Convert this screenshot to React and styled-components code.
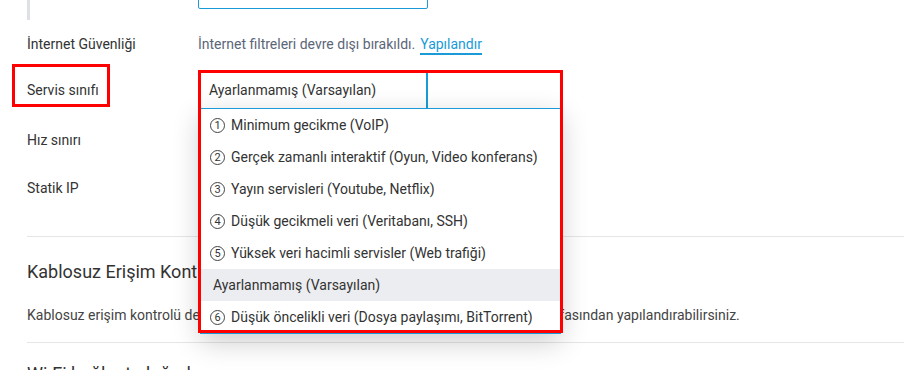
import React from 'react'
import styled, { createGlobalStyle } from 'styled-components'

const GlobalStyle = createGlobalStyle`
  body {
    margin: 0;
    background: #fff;
    font-family: Roboto, 'Noto Sans', sans-serif;
    color: #333;
  }
`

const Page = styled.div`
  width: 904px;
  height: 370px;
  overflow: hidden;
  padding-left: 27px;
  box-sizing: border-box;
`

const SubBlock = styled.div`
  margin-top: -30px;
  border-left: 3px solid #dde1e6;
  padding: 3px 0 11px;
  display: grid;
  grid-template-columns: 168px 230px;
`

const TextInput = styled.div`
  grid-column: 2;
  height: 36px;
  border: 1px solid #1a9bd7;
  border-radius: 2px;
  box-sizing: border-box;
`

const Row = styled.div`
  display: grid;
  grid-template-columns: 171px 1fr;
  align-items: center;
  height: ${(p) => p.$h}px;
  font-size: 14px;
`

const Label = styled.div`
  position: relative;
  font-size: 14px;
  color: #333;
  ${(p) =>
    p.$marked &&
    `
    &::before {
      content: '';
      position: absolute;
      left: -15px;
      top: -18px;
      width: 98px;
      height: 43px;
      border: 3px solid #f00;
      box-sizing: border-box;
    }
  `}
`

const Muted = styled.span`
  color: #5b6678;
`

const Link = styled.a`
  color: #1a9bd7;
  text-decoration: none;
  border-bottom: 2px solid #1a9bd7;
  padding-bottom: 1px;
  margin-left: 5px;
`

const SelectWrap = styled.div`
  position: relative;
  width: 230px;
  z-index: 2;
`

const SelectBox = styled.div`
  height: 38px;
  border: 1px solid #1a9bd7;
  border-right-width: 2px;
  box-sizing: border-box;
  display: flex;
  align-items: center;
  padding-left: 10px;
  font-size: 14px;
  color: #333;
`

const Menu = styled.ul`
  position: absolute;
  left: 2px;
  top: 37px;
  width: 361px;
  margin: 0;
  padding: 0;
  list-style: none;
  background: #fff;
  border: 1px solid #1a9bd7;
  box-sizing: border-box;
  box-shadow: 0 8px 26px rgba(0, 0, 0, 0.2);
`

const Item = styled.li`
  display: flex;
  align-items: center;
  height: 32px;
  padding-left: ${(p) => (p.$active ? 12 : 9)}px;
  background: ${(p) => (p.$active ? '#ecedf0' : '#fff')};
  font-size: 14px;
  color: #333;
  white-space: nowrap;
`

const Circle = styled.span`
  display: inline-flex;
  align-items: center;
  justify-content: center;
  width: 15px;
  height: 15px;
  border: 1px solid #444;
  border-radius: 50%;
  box-sizing: border-box;
  font-size: 11px;
  line-height: 1;
  margin-right: 6px;
  color: #333;
`

const Marker = styled.div`
  position: absolute;
  left: 0;
  top: -1px;
  width: 365px;
  height: 263px;
  border: 3px solid #f00;
  box-sizing: border-box;
  pointer-events: none;
`

const Divider = styled.hr`
  border: 0;
  border-top: 1px solid #e6e6e6;
  margin: ${(p) => p.$mt}px 0 0;
`

const Heading = styled.h2`
  margin: ${(p) => p.$mt}px 0 0;
  font-size: 18px;
  line-height: 24px;
  font-weight: 400;
  color: #333;
  white-space: nowrap;
`

const Desc = styled.p`
  margin: 21px 0 0;
  font-size: 14px;
  line-height: 20px;
  color: #444;
  white-space: nowrap;
`

const options = [
  { n: 1, text: 'Minimum gecikme (VoIP)' },
  { n: 2, text: 'Gerçek zamanlı interaktif (Oyun, Video konferans)' },
  { n: 3, text: 'Yayın servisleri (Youtube, Netflix)' },
  { n: 4, text: 'Düşük gecikmeli veri (Veritabanı, SSH)' },
  { n: 5, text: 'Yüksek veri hacimli servisler (Web trafiği)' },
  { n: null, text: 'Ayarlanmamış (Varsayılan)' },
  { n: 6, text: 'Düşük öncelikli veri (Dosya paylaşımı, BitTorrent)' },
]

const App = () => {
  return (
    <Page>
      <GlobalStyle />
      <SubBlock>
        <TextInput />
      </SubBlock>
      <Row $h={48}>
        <Label>İnternet Güvenliği</Label>
        <div>
          <Muted>İnternet filtreleri devre dışı bırakıldı.</Muted>
          <Link>Yapılandır</Link>
        </div>
      </Row>
      <Row $h={44}>
        <Label $marked>Servis sınıfı</Label>
        <SelectWrap>
          <SelectBox>Ayarlanmamış (Varsayılan)</SelectBox>
          <Menu>
            {options.map((o) => (
              <Item key={o.text} $active={o.n === null}>
                {o.n !== null && <Circle>{o.n}</Circle>}
                {o.text}
              </Item>
            ))}
          </Menu>
          <Marker />
        </SelectWrap>
      </Row>
      <Row $h={56}>
        <Label>Hız sınırı</Label>
      </Row>
      <Row $h={40}>
        <Label>Statik IP</Label>
      </Row>
      <Divider $mt={28} />
      <Heading $mt={23}>Kablosuz Erişim Kontrolü</Heading>
      <Desc>
        Kablosuz erişim kontrolü devre dışı bırakıldı. Bunu Wi-Fi &gt; Kablosuz Erişim Ayarları sayfasından yapılandırabilirsiniz.
      </Desc>
      <Divider $mt={17} />
      <Heading $mt={19}>Wi-Fi bağlantı doğrulayıcısı</Heading>
    </Page>
  )
}

export default App
